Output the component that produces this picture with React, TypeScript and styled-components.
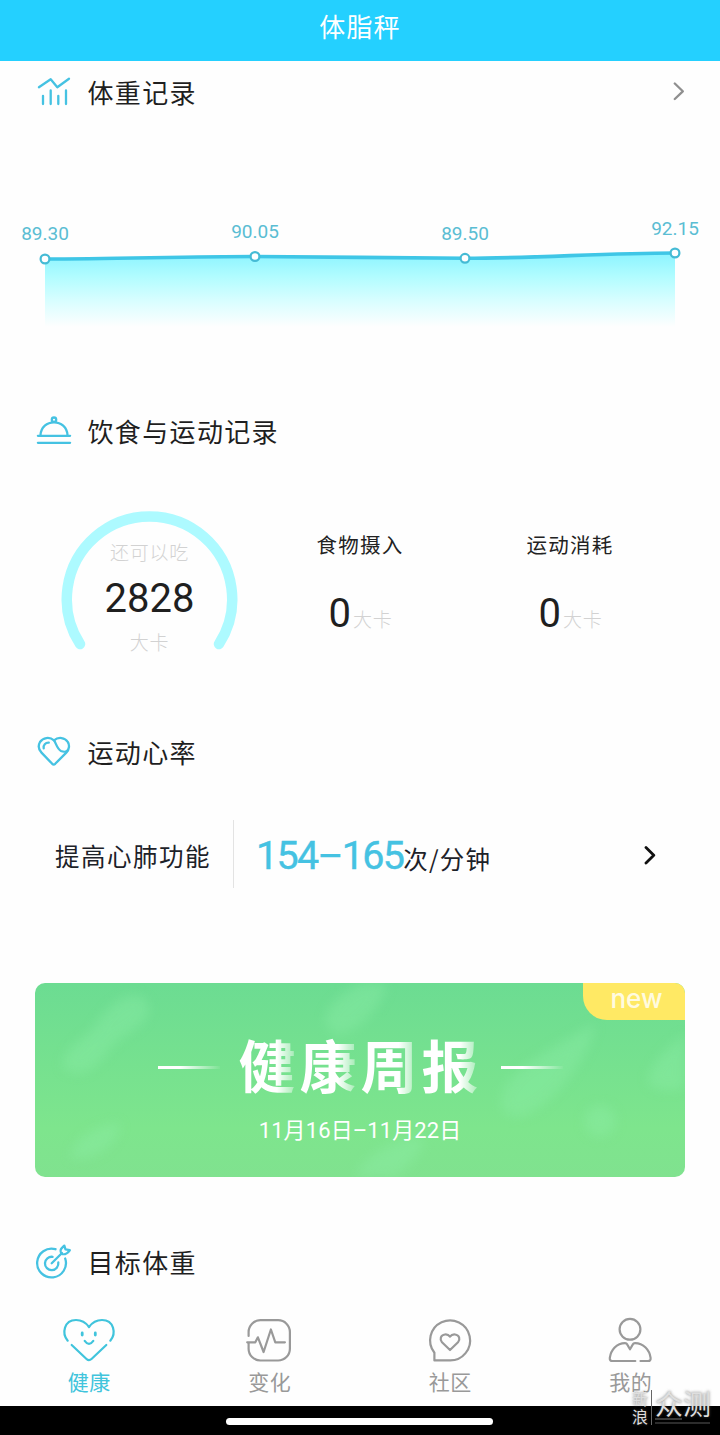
import React from "react";
import styled, { createGlobalStyle } from "styled-components";

const CJK = `"Noto Sans CJK SC", sans-serif`;
const CYAN = "#45c2e2";

const GlobalStyle = createGlobalStyle`
  * { box-sizing: border-box; }
  body { margin: 0; background: #fff; font-family: ${CJK}; color: #222; }
`;

const Page = styled.div`
  position: relative;
  width: 720px;
  height: 1435px;
  overflow: hidden;
  display: flex;
  flex-direction: column;
  background: #fefefe;
`;

const Header = styled.header`
  height: 61px;
  flex: none;
  display: flex;
  justify-content: center;
  background: #24d0ff;
  color: #fff;
  font-size: 26px;
  font-weight: 400;
  letter-spacing: 1.2px;
  line-height: 52px;
`;

const SectionHead = styled.div`
  height: 62px;
  flex: none;
  display: flex;
  align-items: center;
  padding: 0 35px 0 34px;
`;

const SectionIcon = styled.svg`
  width: 40px;
  height: 40px;
  margin-right: 13.5px;
  fill: none;
  stroke: ${CYAN};
  stroke-width: 2.3;
  stroke-linecap: round;
  stroke-linejoin: round;
`;

const SectionTitle = styled.h2`
  flex: 1;
  margin: 0;
  font-size: 26px;
  font-weight: 400;
  letter-spacing: 1.35px;
  line-height: 40px;
  color: #1f1f1f;
`;

const Chevron = styled.svg<{ $color: string; $w: number }>`
  width: 12px;
  height: 20px;
  fill: none;
  stroke: ${(p) => p.$color};
  stroke-width: ${(p) => p.$w};
  stroke-linecap: round;
  stroke-linejoin: round;
`;

const Chart = styled.svg`
  display: block;
  flex: none;
  width: 720px;
  height: 277px;
  font-family: Roboto, sans-serif;
  font-size: 19px;
`;

const DietRow = styled.div`
  height: 259px;
  flex: none;
  display: grid;
  grid-template-columns: 255px 210px 210px;
  padding-top: 48px;
`;

const Gauge = styled.div`
  display: grid;
  width: 178px;
  height: 178px;
  margin-left: 60px;
  > * { grid-area: 1 / 1; }
`;

const GaugeText = styled.div`
  display: flex;
  flex-direction: column;
  align-items: center;
  padding: 28px 0 0 1px;
`;

const Muted = styled.span<{ $size: number }>`
  font-size: ${(p) => p.$size}px;
  font-weight: 300;
  line-height: 28px;
  letter-spacing: 0.8px;
  color: #d2d2d2;
`;

const Calories = styled.span`
  margin: 11px 0 7px;
  font: 400 40px/44px Roboto, sans-serif;
  color: #1f1f1f;
`;

const Stat = styled.div`
  display: flex;
  flex-direction: column;
  align-items: center;
  padding-top: 19px;
`;

const StatLabel = styled.span`
  font-size: 20.5px;
  letter-spacing: 1.3px;
  line-height: 30px;
`;

const StatValue = styled.div`
  display: flex;
  align-items: baseline;
  gap: 2px;
  margin: 32px 0 0 1px;
  b { font: 400 40px/46px Roboto, sans-serif; color: #1f1f1f; }
`;

const RateRow = styled.div`
  height: 146px;
  flex: none;
  display: flex;
  align-items: center;
  padding: 0 64px 0 55px;
`;

const RateName = styled.span`
  width: 178px;
  font-size: 24.5px;
  letter-spacing: 1.5px;
  line-height: 36px;
  white-space: nowrap;
  color: #1d2229;
`;

const Divider = styled.i`
  width: 1px;
  height: 68px;
  margin-top: -4px;
  background: #e3e3e3;
`;

const RateValue = styled.div`
  flex: 1;
  display: flex;
  align-items: baseline;
  padding: 3px 0 0 22px;
  font-size: 24.5px;
  letter-spacing: 1.2px;
  line-height: 46px;
  color: #1d2229;
  b {
    font: 400 39.5px/46px Roboto, sans-serif;
    letter-spacing: -1.7px;
    color: ${CYAN};
    -webkit-text-stroke: 0.4px ${CYAN};
  }
`;

const Banner = styled.section`
  position: relative;
  flex: none;
  width: 650px;
  height: 194px;
  margin: 54px 0 54px 35px;
  display: flex;
  flex-direction: column;
  align-items: center;
  overflow: hidden;
  border-radius: 10px;
  background: linear-gradient(#6cdc92, #7ee58d 75%, #80e28f);
`;

const Leaves = styled.svg`
  position: absolute;
  inset: 0;
  width: 650px;
  height: 194px;
  fill: #90efab;
  filter: blur(6px);
  opacity: 0.35;
`;

const NewTag = styled.span`
  position: absolute;
  top: 0;
  right: 0;
  width: 102px;
  height: 37px;
  padding-left: 5px;
  border-bottom-left-radius: 24px;
  background: #ffe964;
  color: #fffbe0;
  font: 500 26px/31px Inter, sans-serif;
  text-align: center;
`;

const BannerTitle = styled.div`
  position: relative;
  display: flex;
  align-items: center;
  margin-top: 44px;
  height: 76px;
`;

const Dash = styled.i`
  width: 62px;
  height: 3px;
  margin-top: 5px;
  background: linear-gradient(90deg, #fff 35%, rgba(255, 255, 255, 0.05));
`;

const BannerName = styled.h1`
  display: flex;
  margin: -5px 18px 0 19px;
  font-size: 57px;
  font-weight: 700;
  line-height: 76px;
`;

const FadedChar = styled.span`
  width: 61px;
  color: transparent;
  background: linear-gradient(90deg, #fff 62%, rgba(255, 255, 255, 0.25) 96%);
  background-clip: text;
  -webkit-background-clip: text;
`;

const BannerDate = styled.div`
  position: relative;
  margin-top: 11px;
  color: #fff;
  font-family: Roboto, ${CJK};
  font-size: 22px;
  line-height: 34px;
  letter-spacing: 0.1px;
`;

const TabBar = styled.nav`
  flex: none;
  height: 113px;
  margin: 0 -1px;
  padding-top: 23px;
  display: grid;
  grid-template-columns: repeat(4, 1fr);
`;

const Tab = styled.div<{ $active?: boolean }>`
  display: flex;
  flex-direction: column;
  align-items: center;
  color: ${(p) => (p.$active ? "#40c4dc" : "#999")};
  font-size: 21px;
  line-height: 30px;
  letter-spacing: 0.6px;
  svg {
    width: 56px;
    height: 48px;
    margin: 0 1px 2px 0;
    fill: none;
    stroke: currentColor;
    stroke-width: 2.2;
    stroke-linecap: round;
    stroke-linejoin: round;
  }
`;

const SystemBar = styled.div`
  flex: none;
  height: 30px;
  display: flex;
  justify-content: center;
  align-items: center;
  padding-right: 1px;
  background: #000;
`;

const HomeIndicator = styled.i`
  width: 267px;
  height: 7px;
  border-radius: 4px;
  background: #fff;
`;

const Watermark = styled.div`
  position: absolute;
  left: 632px;
  top: 1390px;
  display: flex;
  color: #dedede;
  text-shadow: 0 0 3px rgba(90, 90, 90, 0.75);
`;

const MarkSmall = styled.div`
  width: 20px;
  border-right: 1px solid #666;
  font-size: 16px;
  line-height: 17.5px;
`;

const MarkLarge = styled.div`
  padding-left: 3px;
  font-size: 28px;
  line-height: 27px;
  &::after {
    content: "";
    display: block;
    width: 55px;
    height: 6px;
    margin-top: 1px;
    background:
      linear-gradient(#3a3a3a, #3a3a3a) 0 0 / 27px 2px no-repeat,
      linear-gradient(#2c2c2c, #2c2c2c) 0 4px / 55px 2px no-repeat;
  }
`;

const points = [
  { x: 45, y: 136, label: "89.30", ly: 117 },
  { x: 255, y: 133.5, label: "90.05", ly: 114.5 },
  { x: 465, y: 135.3, label: "89.50", ly: 116.5 },
  { x: 675, y: 130, label: "92.15", ly: 112 },
];
const curve =
  "M45 136C115 136 185 133.5 255 133.5S395 135.3 465 135.3S605 130 675 130";

export default function App() {
  return (
    <Page>
      <GlobalStyle />
      <Header>体脂秤</Header>

      <SectionHead>
        <SectionIcon viewBox="0 0 40 40">
          <path d="M4.9 15.2 16.7 7.2l6.6 8L35 6.7" />
          <path d="M9 23.8v8.2M16.7 18.5v13.5M24.3 23.8v8.2M32 18.5v13.5" />
        </SectionIcon>
        <SectionTitle>体重记录</SectionTitle>
        <Chevron viewBox="0 0 12 20" $color="#8f8f8f" $w={2.3}>
          <path d="M1.8 1.5 9.8 9.3 1.8 17" />
        </Chevron>
      </SectionHead>

      <Chart viewBox="0 0 720 277">
        <defs>
          <linearGradient id="area" x1="0" y1="131" x2="0" y2="204" gradientUnits="userSpaceOnUse">
            <stop offset="0" stopColor="#8df4ff" />
            <stop offset="0.3" stopColor="#b0fcff" />
            <stop offset="0.65" stopColor="#d9feff" />
            <stop offset="1" stopColor="#fefefe" />
          </linearGradient>
        </defs>
        <path d={`${curve}V204H45Z`} fill="url(#area)" />
        <path d={curve} fill="none" stroke="#3fc6e6" strokeWidth="3.6" />
        {points.map((p) => (
          <g key={p.label}>
            <circle cx={p.x} cy={p.y} r="4.4" fill="#fff" stroke="#45bbd5" strokeWidth="2.2" />
            <text x={p.x} y={p.ly} textAnchor="middle" fill="#5abdd3">{p.label}</text>
          </g>
        ))}
      </Chart>

      <SectionHead>
        <SectionIcon viewBox="0 0 40 40">
          <circle cx="20" cy="8.7" r="2.2" />
          <path d="M6.5 24C7 16 13 11.3 20 11.3S33 16 33.5 24M3.9 24.8h32.2M3.9 31.8h32.2" />
        </SectionIcon>
        <SectionTitle>饮食与运动记录</SectionTitle>
      </SectionHead>

      <DietRow>
        <Gauge>
          <svg width="178" height="178" viewBox="0 0 178 178">
            <path
              d="M20 134A82.7 82.7 0 1 1 159 134"
              fill="none"
              stroke="#adfaff"
              strokeWidth="10.5"
              strokeLinecap="round"
            />
          </svg>
          <GaugeText>
            <Muted $size={19}>还可以吃</Muted>
            <Calories>2828</Calories>
            <Muted $size={19}>大卡</Muted>
          </GaugeText>
        </Gauge>
        {["食物摄入", "运动消耗"].map((name) => (
          <Stat key={name}>
            <StatLabel>{name}</StatLabel>
            <StatValue>
              <b>0</b>
              <Muted $size={19}>大卡</Muted>
            </StatValue>
          </Stat>
        ))}
      </DietRow>

      <SectionHead>
        <SectionIcon viewBox="0 0 40 40">
          <path d="M20 8.3C15.5 4.5 9 5.5 6 10C3.8 14 5 18 7.5 20.6L18.2 31.8Q19.7 33.2 21.2 31.8L32.3 20.6C35.3 17.5 35.8 13 33.8 10C31 5.5 24.5 4.5 20 8.3Z" />
          <path d="M20 8.3C22 11 23 17 27 19C30 20.3 33 19.5 34 18M9.7 16.3C9 13 11.5 10.5 14.8 10.7" />
        </SectionIcon>
        <SectionTitle>运动心率</SectionTitle>
      </SectionHead>

      <RateRow>
        <RateName>提高心肺功能</RateName>
        <Divider />
        <RateValue>
          <b>154–165</b>次/分钟
        </RateValue>
        <Chevron viewBox="0 0 12 20" $color="#111" $w={2.8}>
          <path d="M2 1.5 9.8 9.3 2 17" />
        </Chevron>
      </RateRow>

      <Banner>
        <Leaves viewBox="0 0 650 194">
          <path d="M28 85C25 65 50 58 62 40C78 15 100 5 112 18C122 40 90 50 78 62C65 80 50 100 28 85Z" />
          <path d="M290 40C290 20 310 10 325 0H352C350 20 325 50 300 52Z" />
          <path d="M466 120C468 90 500 75 560 40C560 65 520 125 485 134Q468 134 466 120Z" />
          <path d="M613 100C613 78 640 60 650 50V105Q625 112 613 100Z" />
          <circle cx="565" cy="138" r="16" />
          <path d="M35 175C40 150 70 140 85 140C85 160 60 180 35 175Z" />
          <path d="M320 194C330 170 370 150 390 155C385 175 370 185 360 194Z" />
        </Leaves>
        <NewTag>new</NewTag>
        <BannerTitle>
          <Dash />
          <BannerName>
            {[..."健康周报"].map((c) => (
              <FadedChar key={c}>{c}</FadedChar>
            ))}
          </BannerName>
          <Dash />
        </BannerTitle>
        <BannerDate>11月16日–11月22日</BannerDate>
      </Banner>

      <SectionHead>
        <SectionIcon viewBox="0 0 40 40">
          <path d="M21.5 7.2A14.4 14.4 0 1 0 31.2 16.5" />
          <path d="M18.6 14.8A6.7 6.7 0 1 0 24.3 20.5M17.7 21.3 28 11" />
          <path d="M27.3 11.7C25.3 7.6 27.3 6.4 30.3 3.6L31.5 7.3 35.8 8.2C33.4 11.4 31.3 13.4 27.3 11.7Z" />
        </SectionIcon>
        <SectionTitle>目标体重</SectionTitle>
      </SectionHead>

      <TabBar>
        <Tab $active>
          <svg viewBox="0 0 56 48">
            <path d="M6.7 24.7C.5 17.5 3 4 15 4C21.5 4 25.5 7.5 28 11C30.5 7.5 34.5 4 41 4C53 4 55.5 17.5 49.3 24.7" />
            <path d="M10.7 29 25.5 43Q28 45.3 30.5 43L45.3 29" />
            <path d="M21.2 17v2M34.3 17v2" strokeWidth="2.8" />
            <path d="M23.7 24.8Q28 30.8 32.3 24.8" />
          </svg>
          健康
        </Tab>
        <Tab>
          <svg viewBox="0 0 56 48">
            <path d="M7.6 20V16A11.8 11.8 0 0 1 19.4 4.2H37.1A11.8 11.8 0 0 1 48.9 16V32.7A11.8 11.8 0 0 1 37.1 44.5H19.4A11.8 11.8 0 0 1 7.6 32.7V27" />
            <path d="M6.2 26.3H14.3L16.9 21.3 22.6 36 29.9 13.5 34.3 26.3H43.9" />
          </svg>
          变化
        </Tab>
        <Tab>
          <svg viewBox="0 0 56 48">
            <path d="M12.4 44.4V36.8A20 20 0 1 1 27.8 44.4Z" />
            <path d="M28 34 20 26.3C17.5 23.5 18.5 19 22.9 18.5C25.4 18.2 26.9 19.2 28 20.7C29.1 19.2 30.6 18.2 33.1 18.5C37.5 19 38.5 23.5 36 26.3Z" />
          </svg>
          社区
        </Tab>
        <Tab>
          <svg viewBox="0 0 56 48">
            <circle cx="28" cy="13.3" r="10.4" />
            <path d="M33.3 45H10.5Q7.4 45 7.8 41.8C9 34 14.5 27.2 23 27.2Q24.6 27.2 25.3 28.6L28 33.3 30.7 28.6Q31.4 27.2 33 27.2C41.5 27.2 47.5 34 48.6 41.8Q49 45 46 45H38.5" />
          </svg>
          我的
        </Tab>
      </TabBar>

      <SystemBar>
        <HomeIndicator />
      </SystemBar>

      <Watermark>
        <MarkSmall>
          新<br />浪
        </MarkSmall>
        <MarkLarge>众测</MarkLarge>
      </Watermark>
    </Page>
  );
}
